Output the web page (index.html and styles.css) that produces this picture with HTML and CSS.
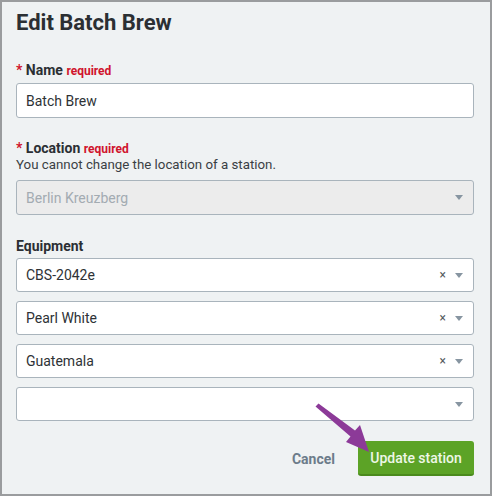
FILE: index.html
```html
<!DOCTYPE html>
<html lang="en">
<head>
    <meta charset="UTF-8">
    <meta name="viewport" content="width=device-width, initial-scale=1.0">
    <title>Edit Batch Brew</title>
    <link rel="stylesheet" href="styles.css">
</head>
<body>
    <div class="modal">
        <h1 class="title">Edit Batch Brew</h1>

        <div class="field first">
            <label class="label"><span class="star">*</span> Name <span class="req">required</span></label>
            <div class="input">Batch Brew</div>
        </div>

        <div class="field">
            <label class="label"><span class="star">*</span> Location <span class="req">required</span></label>
            <p class="help">You cannot change the location of a station.</p>
            <div class="input select disabled">
                <span class="value">Berlin Kreuzberg</span>
                <span class="caret"></span>
            </div>
        </div>

        <div class="field equipment">
            <label class="label">Equipment</label>
            <div class="list">
                <div class="input select">
                    <span class="value">CBS-2042e</span>
                    <span class="clear">×</span>
                    <span class="caret"></span>
                </div>
                <div class="input select">
                    <span class="value">Pearl White</span>
                    <span class="clear">×</span>
                    <span class="caret"></span>
                </div>
                <div class="input select">
                    <span class="value">Guatemala</span>
                    <span class="clear">×</span>
                    <span class="caret"></span>
                </div>
                <div class="input select">
                    <span class="value"></span>
                    <span class="caret"></span>
                </div>
            </div>
        </div>

        <div class="actions">
            <button class="btn-cancel">Cancel</button>
            <button class="btn-primary">Update station</button>
        </div>

        <!-- annotation arrow pointing at the button -->
        <svg class="pointer" width="80" height="70" viewBox="0 0 80 70">
            <path d="M20.5 8.5 L57 35.5 L62 30 L71 57 L48 47 L52.5 41.5 L17.5 11.5 Z" fill="#8c3a98"/>
        </svg>
    </div>
</body>
</html>
```

FILE: styles.css
```css
*{
    box-sizing: border-box;
}
body{
    margin: 0;
    font-family: Roboto, "Liberation Sans", sans-serif;
    color: #2d3135;
}
.modal{
    position: relative;
    width: 492px;
    height: 496px;
    border: 2px solid #9a9c9e;
    background: #eff2f3;
    padding: 7px 16px 0 14px;
}
.title{
    margin: 0;
    font-size: 22px;
    line-height: 28px;
    font-weight: 700;
    color: #2b2f33;
}
.field{
    margin-top: 21px;
}
.field.first{
    margin-top: 24px;
}
.field.equipment{
    margin-top: 22px;
}
.label{
    display: block;
    font-size: 14px;
    line-height: 18px;
    font-weight: 700;
    color: #2b2f33;
    margin-bottom: 3px;
}
.star, .req{
    color: #d0142c;
}
.req{
    font-size: 12px;
}
.help{
    margin: -5px 0 6px;
    font-size: 13.3px;
    line-height: 18px;
    color: #3a3f44;
}
.input{
    display: flex;
    align-items: center;
    height: 35px;
    padding: 0 9px;
    background: #fff;
    border: 1px solid #a9b4bc;
    border-radius: 3px;
    font-size: 14px;
    color: #2e3236;
}
.select .value{
    flex: 1;
}
.disabled{
    background: #ececec;
    color: #a3abb2;
}
.list{
    display: flex;
    flex-direction: column;
    gap: 9px;
}
.list .input{
    height: 34px;
}
.clear{
    font-size: 12px;
    color: #555a5e;
    margin-right: 9px;
    line-height: 1;
}
.caret{
    width: 0;
    height: 0;
    border-left: 4px solid transparent;
    border-right: 4px solid transparent;
    border-top: 5px solid #8795a1;
    margin-right: 1px;
}
.actions{
    display: flex;
    justify-content: flex-end;
    align-items: center;
    gap: 23px;
    margin-top: 20px;
}
.btn-cancel{
    border: 0;
    background: none;
    padding: 0;
    font-family: inherit;
    font-size: 14px;
    font-weight: 700;
    color: #6c7c8a;
}
.btn-primary{
    width: 116px;
    height: 35px;
    border: 0;
    border-bottom: 2px solid #4a8a1c;
    border-radius: 3px;
    background: #5ca326;
    font-family: inherit;
    font-size: 14px;
    font-weight: 500;
    color: #eef7e6;
}
.pointer{
    position: absolute;
    left: 296px;
    top: 393px;
}
```
